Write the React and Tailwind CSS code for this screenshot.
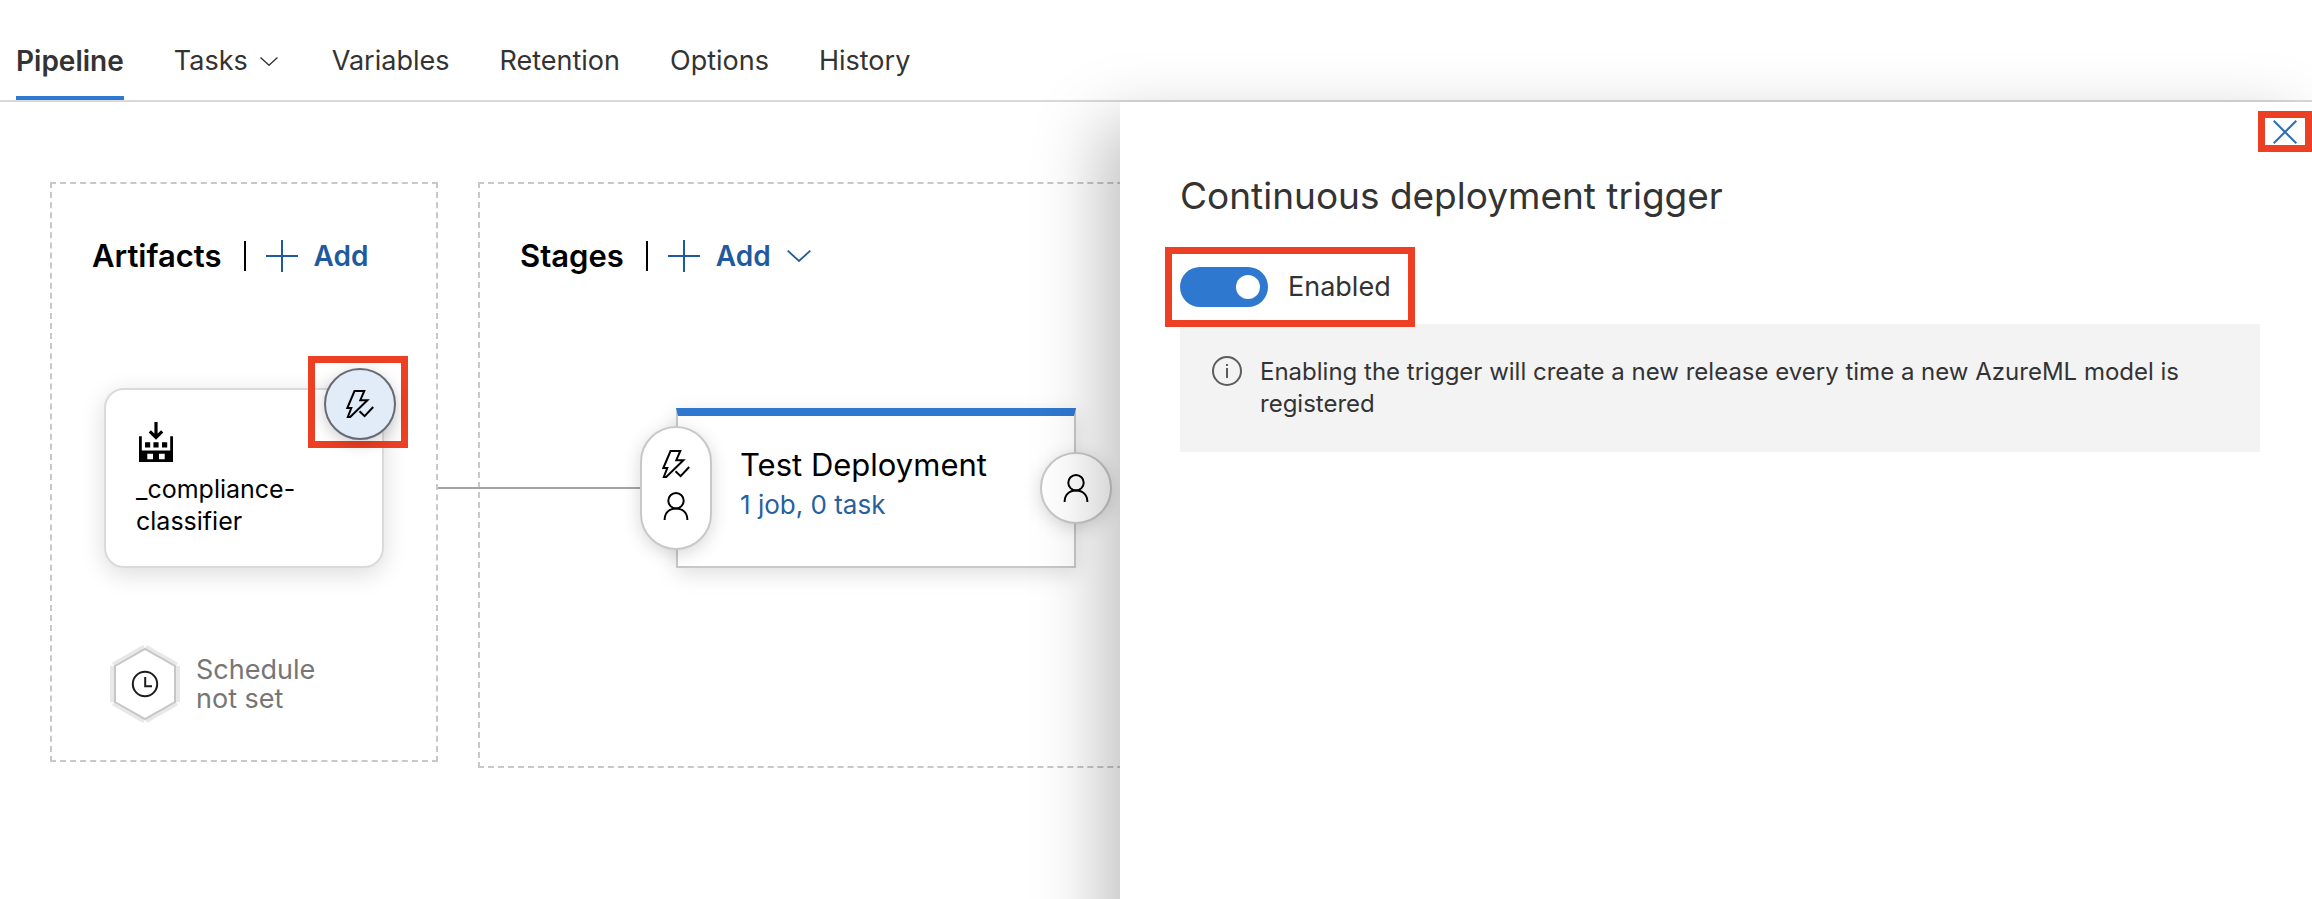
import { useState } from "react";

function Chevron({ className }) {
  return (
    <svg className={className} viewBox="0 0 24 12" fill="none" stroke="currentColor" strokeWidth="1.8" aria-hidden="true">
      <path d="M0.7 0.7 12 11 23.3 0.7" />
    </svg>
  );
}

function Plus() {
  return (
    <svg className="h-8 w-8" viewBox="0 0 32 32" stroke="currentColor" strokeWidth="2" aria-hidden="true">
      <path d="M16 0V32M0 16H32" />
    </svg>
  );
}

function BoltCheck() {
  return (
    <svg className="h-7 w-7" viewBox="0 0 28 28" fill="none" stroke="currentColor" strokeWidth="2" aria-hidden="true">
      <path d="M8.5 1H18.3L14.3 10.2H21.4L4.2 27H1.8L5.3 18H1.3Z" />
      <path d="M13.5 21.3 18.6 26.2 27.2 17" />
    </svg>
  );
}

function Person() {
  return (
    <svg className="h-7 w-7" viewBox="0 0 28 28" fill="none" stroke="currentColor" strokeWidth="2" aria-hidden="true">
      <circle cx="14" cy="8.7" r="7.7" />
      <path d="M2.6 28C2.6 21 7 16.4 14 16.4S25.4 21 25.4 28" />
    </svg>
  );
}

function ModelSource() {
  return (
    <svg className="ml-[3px] h-10 w-[34px]" viewBox="0 0 34 40" aria-hidden="true">
      <path d="M17 0V15M10.8 9.3 17 15.4 23.2 9.3" fill="none" stroke="#000" strokeWidth="3.2" />
      <path
        fillRule="evenodd"
        d="M0 14.3H2.8V28.5H31.2V14.3H34V40H0ZM8.3 31.7V37.3H14V31.7ZM20 31.7V37.3H25.7V31.7Z"
      />
      <path d="M6 20.3H11.2V25.4H6ZM14.4 20.3H19.6V25.4H14.4ZM23 20.3H28.2V25.4H23Z" />
    </svg>
  );
}

function ScheduleHexagon() {
  return (
    <svg className="h-20 w-[70px]" viewBox="0 0 70 80" fill="none" aria-hidden="true">
      <g stroke="#e8e8e8" strokeWidth="4">
        <path d="M2 22V58M68 22V58M3 20.5 34 2.8M36 2.8 67 20.5M3 59.5 34 77.2M36 77.2 67 59.5" />
      </g>
      <path d="M5 22 35 4.8 65 22V58L35 75.2 5 58Z" fill="#fff" stroke="#c6c6c6" strokeWidth="2" />
      <circle cx="35" cy="40" r="12.2" stroke="#1c1c1c" strokeWidth="2" />
      <path d="M35.2 33V42.2H42" stroke="#1c1c1c" strokeWidth="2" />
    </svg>
  );
}

const tabs = ["Pipeline", "Tasks", "Variables", "Retention", "Options", "History"];

function Tabs() {
  return (
    <nav className="flex gap-[50px] border-b-2 border-[#d9d9d9] px-4 pt-5 leading-9 text-[#333]">
      {tabs.map((tab, i) => (
        <a
          key={tab}
          href="#"
          className={
            i === 0
              ? "flex h-20 items-center border-b-4 border-[#2f78cf] pt-1.5 text-[28px] font-semibold"
              : "flex h-20 items-center border-b-4 border-transparent pt-1.5 text-[27px]"
          }
        >
          {tab}
          {tab === "Tasks" && <Chevron className="mr-1 ml-3 h-[9px] w-[18px]" />}
        </a>
      ))}
    </nav>
  );
}

function ColumnHeader({ title, menu }) {
  return (
    <div className="flex h-8 items-center pl-10">
      <h2 className="text-[31px] leading-8 font-semibold">{title}</h2>
      <span className="ml-[22px] h-[30px] w-0.5 bg-black" />
      <button className="ml-5 flex h-8 items-center gap-4 text-[28px] leading-8 font-semibold text-[#1f5a9e]">
        <Plus />
        Add
        {menu && <Chevron className="h-3 w-6" />}
      </button>
    </div>
  );
}

function Artifacts() {
  return (
    <section className="w-[388px] shrink-0 self-start border-2 border-dashed border-[#c8c8c8] pt-14 pb-9">
      <ColumnHeader title="Artifacts" />
      <div className="relative mt-[116px] ml-[52px] h-[180px] w-[280px] rounded-[20px] border-2 border-[#dadada] bg-white pt-8 pl-[30px] shadow-[0_6px_24px_rgba(0,0,0,0.14)]">
        <ModelSource />
        <p className="mt-[11px] text-[25px] leading-8">
          _compliance-
          <br />
          classifier
        </p>
        <div className="absolute -top-[34px] -right-[26px] border-[7px] border-[#ed3f23] pt-[5px] pr-[5px] pb-px pl-[9px]">
          <button
            aria-label="Continuous deployment trigger"
            className="flex size-[72px] items-center justify-center rounded-full border-2 border-[#666b73] bg-[#e2ebf8] shadow-[0_4px_16px_rgba(0,0,0,0.2)]"
          >
            <BoltCheck />
          </button>
        </div>
      </div>
      <button className="mt-[76px] ml-[58px] flex items-center gap-4 text-left text-[27px] leading-[29px] text-[#767676]">
        <ScheduleHexagon />
        <span>
          Schedule
          <br />
          not set
        </span>
      </button>
    </section>
  );
}

function Stages() {
  return (
    <section className="relative min-w-[1000px] flex-1 self-start border-2 border-dashed border-[#c8c8c8] pt-14 pb-[198px]">
      <ColumnHeader title="Stages" menu />
      <div className="absolute top-[303px] -left-[42px] h-0.5 w-[204px] bg-[#a3a3a3]" />
      <div className="relative mt-[136px] ml-[196px] h-40 w-[400px] border-2 border-t-8 border-[#c8c8c8] border-t-[#2f78cf] bg-white pt-[29px] pl-[62px] shadow-[0_6px_20px_rgba(0,0,0,0.13)]">
        <h3 className="text-[31px] leading-10">Test Deployment</h3>
        <a href="#" className="block text-[26px] leading-10 text-[#285f9f]">
          1 job, 0 task
        </a>
        <button
          aria-label="Pre-deployment conditions"
          className="absolute top-2.5 -left-[38px] flex h-[124px] w-[72px] flex-col items-center gap-3.5 rounded-full border-2 border-[#c8c8c8] bg-white pt-[22px] shadow-[0_4px_18px_rgba(0,0,0,0.16)]"
        >
          <BoltCheck />
          <Person />
        </button>
        <button
          aria-label="Post-deployment conditions"
          className="absolute top-9 -right-[38px] flex size-[72px] items-center justify-center rounded-full border-2 border-[#c8c8c8] bg-white shadow-[0_4px_18px_rgba(0,0,0,0.16)]"
        >
          <Person />
        </button>
      </div>
    </section>
  );
}

function TriggerPanel() {
  const [enabled, setEnabled] = useState(true);
  return (
    <aside className="absolute top-0 right-0 -bottom-24 w-[1192px] bg-white shadow-[-18px_22px_64px_rgba(0,0,0,0.25)]">
      <div className="flex justify-end pt-[9px]">
        <button
          aria-label="Close"
          className="flex h-[41px] w-[54px] items-center justify-center border-[7px] border-[#ed3f23] text-[#2f6fb8]"
        >
          <svg className="size-6" viewBox="0 0 24 24" stroke="currentColor" strokeWidth="2" aria-hidden="true">
            <path d="M0.7 0.7 23.3 23.3M23.3 0.7 0.7 23.3" />
          </svg>
        </button>
      </div>
      <h1 className="mt-5 pl-[60px] text-[37px] leading-[48px] text-[#333]">Continuous deployment trigger</h1>
      <div className="relative z-10 mt-[27px] ml-[45px] flex h-20 w-[250px] items-center border-[7px] border-[#ed3f23] pl-2">
        <label className="flex items-center gap-5 text-[27px] leading-9 text-[#333]">
          <input
            type="checkbox"
            role="switch"
            checked={enabled}
            onChange={(e) => setEnabled(e.target.checked)}
            className="flex h-10 w-[88px] appearance-none items-center rounded-full bg-[#8a8a8a] px-2 before:size-6 before:rounded-full before:bg-white before:content-[''] checked:justify-end checked:bg-[#2f78cf]"
          />
          {enabled ? "Enabled" : "Disabled"}
        </label>
      </div>
      <div className="-mt-[3px] mr-[52px] ml-[60px] flex h-32 gap-[18px] bg-[#f3f3f3] py-8 pr-16 pl-8 text-[24px] leading-8 text-[#333]">
        <svg className="size-[30px] shrink-0" viewBox="0 0 30 30" fill="none" stroke="#5c5c5c" strokeWidth="2" aria-hidden="true">
          <circle cx="15" cy="15" r="14" />
          <path d="M15 12V22M15 8V10" />
        </svg>
        <p>Enabling the trigger will create a new release every time a new AzureML model is registered</p>
      </div>
    </aside>
  );
}

export default function App() {
  return (
    <div className="flex min-h-screen flex-col overflow-hidden bg-white font-['Inter',sans-serif] text-black">
      <Tabs />
      <main className="relative flex flex-1 gap-10 pt-20 pb-10 pl-[50px]">
        <Artifacts />
        <Stages />
        <TriggerPanel />
      </main>
    </div>
  );
}
